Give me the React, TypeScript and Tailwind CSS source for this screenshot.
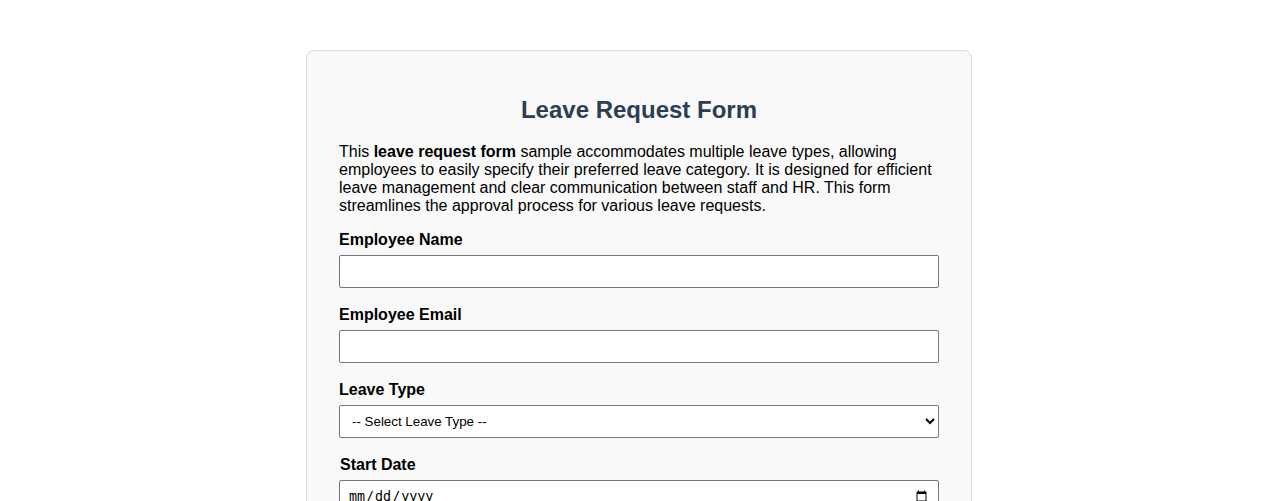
export default function App() {
  const fieldCls =
    'block w-full h-[33px] px-2 bg-white border border-[#767676] rounded-[2px] text-[13.33px] text-black mb-[18px]'
  const labelCls = 'block text-base leading-[18px] font-bold text-black mb-[6px]'

  return (
    <div className="min-h-screen bg-white font-['Liberation_Sans',Arial,sans-serif]">
      <div className="w-[666px] mx-auto mt-[50px] bg-[#f9f9f9] border border-[#dddddd] rounded-lg px-8 pt-[45px] pb-8">
        <h2 className="text-center text-2xl leading-[28px] font-bold text-[#2c3e50] mb-[19px]">Leave Request Form</h2>
        <p className="text-base leading-[18px] text-black mb-4">
          This <strong>leave request form</strong> sample accommodates multiple leave types, allowing employees to
          easily specify their preferred leave category. It is designed for efficient leave management and clear
          communication between staff and HR. This form streamlines the approval process for various leave requests.
        </p>

        <form>
          <label className={labelCls}>Employee Name</label>
          <input type="text" className={fieldCls} />

          <label className={labelCls}>Employee Email</label>
          <input type="email" className={fieldCls} />

          <label className={labelCls}>Leave Type</label>
          <select className={fieldCls} defaultValue="">
            <option value="">-- Select Leave Type --</option>
            <option>Annual Leave</option>
            <option>Sick Leave</option>
            <option>Maternity Leave</option>
            <option>Unpaid Leave</option>
          </select>

          <label className={labelCls + ' pl-px'}>Start Date</label>
          <input type="date" className={fieldCls + " font-['DejaVu_Sans_Mono',monospace] text-[12px]"} />

          <label className={labelCls}>End Date</label>
          <input type="date" className={fieldCls + " font-['DejaVu_Sans_Mono',monospace] text-[12px]"} />
        </form>
      </div>
    </div>
  )
}
